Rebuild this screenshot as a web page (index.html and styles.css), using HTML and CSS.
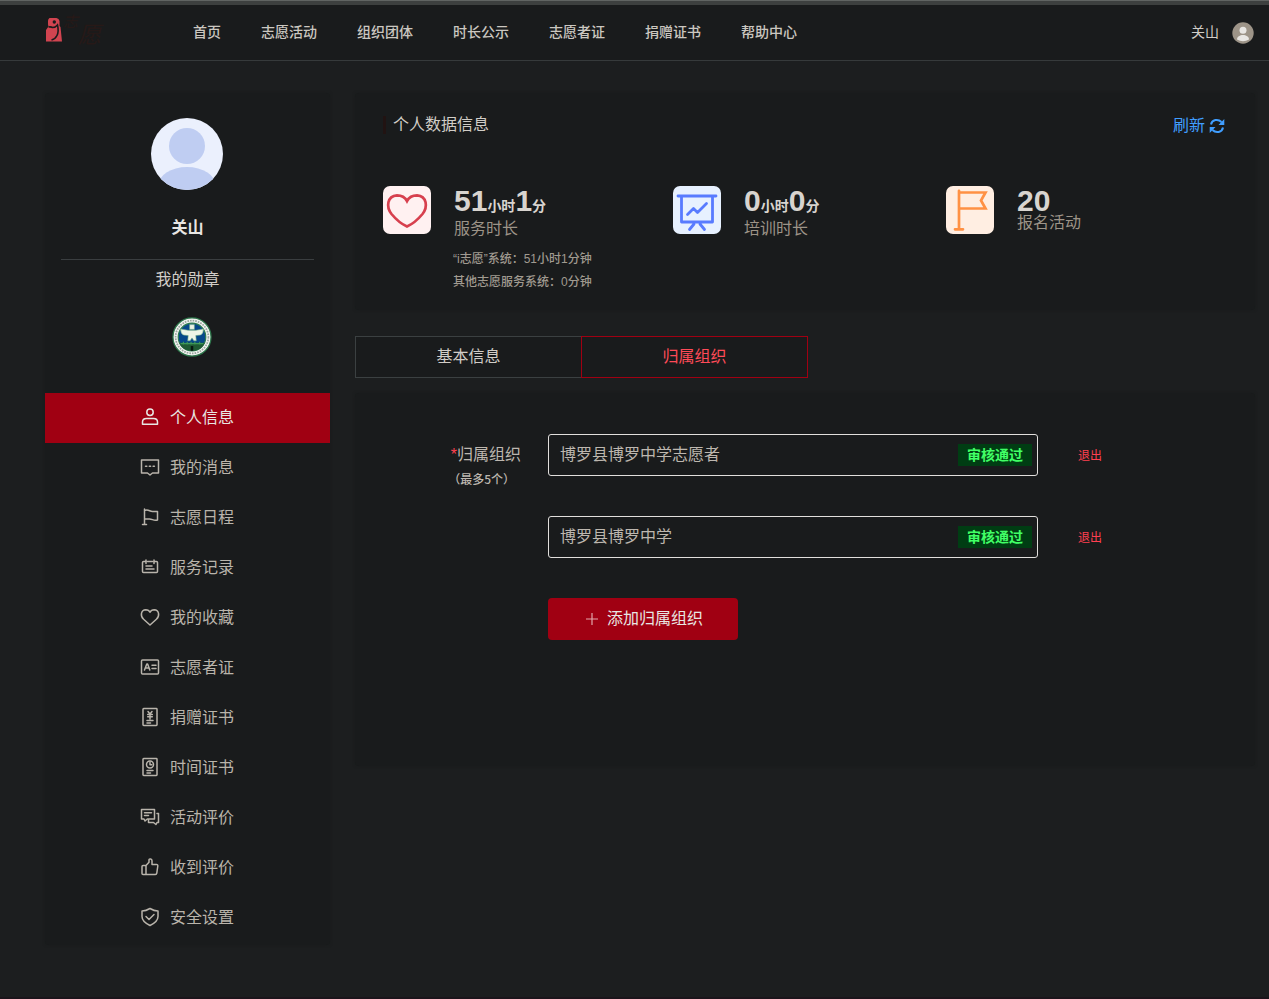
FILE: index.html
```html
<!DOCTYPE html>
<html lang="zh-CN">
<head>
<meta charset="utf-8">
<title>个人中心</title>
<link rel="stylesheet" href="styles.css">
</head>
<body>
<div class="edge"></div>
<header class="header">
  <div class="logo">
    <svg width="18" height="25" viewBox="0 0 18 25"><path d="M4.500 0h7Q14 .5 14.500 3v5l1 1 1.500 14.500h-16L1 12l2.500-3.500-.5-2V3Q3 .8 4.500 0Z" fill="#d14450"/><circle cx="9.300" cy="4" r="1.700" fill="#191b1c"/><path d="M3.500 9q2.500-.5 4 .5 3 0 5-2.500 1.500 6.500-.5 10.500-1.700 3.500-5.500 4.500" fill="none" stroke="#191b1c" stroke-width="1.600"/></svg>
    <span class="brand"><i class="brand-a">志</i><i class="brand-b">愿</i></span>
  </div>
  <nav class="nav"><a>首页</a><a>志愿活动</a><a>组织团体</a><a>时长公示</a><a>志愿者证</a><a>捐赠证书</a><a>帮助中心</a></nav>
  <div class="account"><span>关山</span>
    <svg width="22" height="22" viewBox="0 0 22 22"><circle cx="11" cy="11" r="10.700" fill="#9d9488"/><circle cx="11" cy="8.300" r="3.500" fill="#e8e6e3"/><path d="M5 17.500c0-6 12-6 12 0q-6 3.500-12 0Z" fill="#e8e6e3"/></svg>
  </div>
</header>
<main class="page">
  <aside class="sidebar">
    <svg class="avatar" width="72" height="72" viewBox="0 0 72 72"><defs><clipPath id="face"><circle cx="36" cy="36" r="36"/></clipPath></defs><g clip-path="url(#face)"><path fill="#ebf0fd" d="M0 0h72v72H0z"/><circle cx="36" cy="28" r="18" fill="#bfcdf2"/><ellipse cx="36" cy="68" rx="29" ry="19" fill="#bfcdf2"/></g></svg>
    <div class="name">关山</div>
    <div class="medals">我的勋章</div>
    <svg class="badge" width="40" height="40" viewBox="0 0 42 42"><circle cx="21" cy="21" r="20" fill="#f1f4f0" stroke="#2d774b" stroke-width="1.300"/><circle cx="21" cy="21" r="17.200" fill="none" stroke="#9ba59f" stroke-width="1.800" stroke-dasharray="1.700 1.100"/><circle cx="21" cy="21" r="14.500" fill="#07488a" stroke="#2e7d50" stroke-width="1.200"/><path d="M7.500 27h27q-3 8.500-13.500 8.500T7.500 27Z" fill="#1f5a33"/><path d="M9 28h24M12 26v3m4-3v3m4-3v3m4-3v3m5-3v3" stroke="#3d9856" stroke-width="1.200"/><path d="M19.700 30.500h2.600v5h-2.600z" fill="#08180f"/><path d="M18.500 8h5v5h-5zM9 12.500l8 1.500h8l8-1.500q0 5-3 6.500l-5 .5 .5 5.500h-2.500l-2-3-2 3h-2.500l.5-5.500-5-.5q-3-1.500-3-6.500Z" fill="#eef5e7" stroke="#72ad83" stroke-width=".6"/></svg>
    <ul class="menu">
      <li class="active"><svg viewBox="0 0 20 20"><circle cx="10" cy="5.200" r="3.200"/><path d="M2.500 17.300V15c0-2.500 2-3.500 4-3.500h7c2 0 4 1 4 3.500v2.300Z"/></svg>个人信息</li>
      <li><svg viewBox="0 0 20 20"><path d="M1.500 3h17v13h-6L10 18l-2.500-2h-6ZM5.500 9.200h1.300m2.500 0h1.300m2.500 0h1.300"/></svg>我的消息</li>
      <li><svg viewBox="0 0 20 20"><path d="M4.500 2v15.500M2.500 17.500h4M4.500 3.500c4-1.500 5 1 8 1h5V13c-4 1-5-1-8-1h-5"/></svg>志愿日程</li>
      <li><svg viewBox="0 0 20 20"><path d="M5 4.500H3.500q-1 0-1 1v9q0 1 1 1h13q1 0 1-1v-9q0-1-1-1H15M7.500 4.500h5M6 3v3.500M14 3v3.500M6 9h6M6 12h8"/></svg>服务记录</li>
      <li><svg viewBox="0 0 20 20"><path d="M10 18 3.600 12.300C0 9 .8 3 5.800 2.700c2 0 3.500 1 4.200 2.600.7-1.600 2.200-2.600 4.200-2.600 5 .3 5.800 6.300 2.200 9.600Z"/></svg>我的收藏</li>
      <li><svg viewBox="0 0 20 20"><rect x="1.500" y="3" width="17" height="14" rx="1"/><path d="m4.500 13 2.300-6h.8l2.200 6M5.500 11h3.500M12 8.200h4M12 11.500h4"/></svg>志愿者证</li>
      <li><svg viewBox="0 0 20 20"><rect x="3" y="1.500" width="14" height="17" rx=".7"/><path d="m8 4.500 2 2.500 2-2.500M10 7v5M7.700 7.500h4.600M7.700 9.800h4.600M7 13.500h6M7 16h3.500"/></svg>捐赠证书</li>
      <li><svg viewBox="0 0 20 20"><rect x="3" y="1.500" width="14" height="17" rx=".7"/><circle cx="10" cy="7.500" r="3.500"/><path d="M10 5.500v2.200h1.800M7 13.500h6M7 16h3.500"/></svg>时间证书</li>
      <li><svg viewBox="0 0 20 20"><path d="M1.500 2.500h13V12H7.300L5 14l-1-2H1.500ZM4.500 5.800h7M4.500 8.500h4M17 6.500h1.500v9H17l-1 2-2.500-2h-5V13"/></svg>活动评价</li>
      <li><svg viewBox="0 0 20 20"><path d="M6 8.500V17.500H3q-1 0-1-1v-7q0-1 1-1h3l3-3.200V3c0-1.500 3-1.500 3 .8v3.700h4.500q1.500 0 1.300 1.500l-1 7.200q-.2 1.300-1.500 1.300H6"/></svg>收到评价</li>
      <li><svg viewBox="0 0 20 20"><path d="M10 1.500q4 2.500 8 2.500v5.500c0 4-3.500 6.800-8 9-4.500-2.200-8-5-8-9V4q4 0 8-2.500ZM6 9.500l3 3 5-5"/></svg>安全设置</li>
    </ul>
  </aside>
  <div class="content">
    <section class="panel summary">
      <div class="summary-head"><h2>个人数据信息</h2><a class="refresh">刷新 <svg width="16" height="16" viewBox="0 0 16 16"><path d="M2 6.500C3 1.500 9 .5 12.500 4M14 9.500c-1 5-7 6-10.500 2.500" fill="none" stroke="#409eff" stroke-width="2"/><path d="M15.300 1v6H9.500ZM.7 15V9h5.800Z" fill="#409eff"/></svg></a></div>
      <div class="stats">
        <div class="stat"><svg width="48" height="48" viewBox="0 0 48 48"><rect width="48" height="48" rx="7" fill="#fff1f1"/><path d="M24 40.500Q16 37 8.500 28C3 21 4 10 14 9.300q7 0 10 5.700 3-5.700 10-5.700C44 10 45 21 39.500 28Q32 37 24 40.500Z" fill="none" stroke="#d7404e" stroke-width="2.700"/></svg>
          <div><div class="value">51<small>小时</small>1<small>分</small></div><div class="label">服务时长</div><div class="detail"><p>“i志愿”系统：51小时1分钟</p><p>其他志愿服务系统：0分钟</p></div></div></div>
        <div class="stat"><svg width="48" height="48" viewBox="0 0 48 48"><rect width="48" height="48" rx="7" fill="#e7f1ff"/><path d="M5 10h38M8.500 10v26h31V10M21 38l-4.500 5.500M27 38l4.500 5.500M14.500 28.500l6-6 4 4 9-9" fill="none" stroke="#587bff" stroke-width="2.800" stroke-linecap="round" stroke-linejoin="round"/></svg>
          <div><div class="value">0<small>小时</small>0<small>分</small></div><div class="label">培训时长</div></div></div>
        <div class="stat"><svg width="48" height="48" viewBox="0 0 48 48"><rect width="48" height="48" rx="7" fill="#ffeee2"/><path d="M13 4.800V43M9 43.300h8M13 6.500h26.500l-4.500 8 4.500 8H13" fill="none" stroke="#ff9144" stroke-width="2.700" stroke-linecap="round"/></svg>
          <div><div class="value short">20</div><div class="label">报名活动</div></div></div>
      </div>
    </section>
    <div class="tabs"><div class="tab">基本信息</div><div class="tab current">归属组织</div></div>
    <section class="panel form">
      <div class="form-label"><div><b>*</b>归属组织</div><small>（最多5个）</small></div>
      <div class="orgs">
        <div class="org"><div class="field">博罗县博罗中学志愿者<span class="status">审核通过</span></div><a class="quit">退出</a></div>
        <div class="org"><div class="field">博罗县博罗中学<span class="status">审核通过</span></div><a class="quit">退出</a></div>
        <div class="add"><svg width="12" height="12" viewBox="0 0 12 12"><path d="M0 6h12M6 0v12" stroke="#e2a7ab" stroke-width="1.200"/></svg>添加归属组织</div>
      </div>
    </section>
  </div>
</main>
</body>
</html>
```
FILE: styles.css
```css
* { box-sizing: border-box; }
body {
  margin: 0;
  height: 999px;
  overflow: hidden;
  display: flex;
  flex-direction: column;
  background: #1c1e1f;
  border-bottom: 2px solid #1b151b;
  color: #d1cdc7;
  font: 16px/24px "Liberation Sans", "Noto Sans CJK SC", sans-serif;
}
svg { display: block; flex: none; }
h2, p, ul { margin: 0; padding: 0; }

.edge { height: 5px; flex: none; border-top: 1px solid #606462; background: #3d403f; }
.header {
  height: 56px;
  flex: none;
  display: flex;
  border-bottom: 1px solid #363a3b;
  background: #191b1c;
  font-size: 14px;
  line-height: 55px;
}
.logo { width: 193px; padding: 13px 0 0 45px; display: flex; }
.brand { display: flex; color: #271917; font-family: "Noto Sans CJK SC", sans-serif; }
.brand-a { font-size: 15px; line-height: 15px; height: 15px; margin-top: -5px; }
.brand-b { font-size: 23px; line-height: 23px; height: 23px; margin-top: 4px; }
.nav { display: flex; gap: 40px; font-weight: 500; color: #cbc7c0; }
.account { margin-left: auto; display: flex; align-items: center; gap: 13px; padding-right: 15px; }

.page { display: flex; gap: 25px; padding: 32px 14px 0 45px; align-items: flex-start; }
.sidebar, .panel { background: #191b1c; border-radius: 4px; box-shadow: 0 0 3px #191b1c; }
.sidebar { width: 285px; height: 852px; padding-top: 25px; }
.avatar { margin-left: 106px; }
.name { height: 70px; margin: 0 16px; padding-top: 26px; border-bottom: 1px solid #3a3e40; text-align: center; font-weight: 700; color: #e8e6e3; }
.medals { text-align: center; margin-top: 8px; }
.badge { margin: 25px 0 0 127px; }
.menu { list-style: none; margin-top: 36px; }
.menu li { height: 50px; display: flex; align-items: center; gap: 10px; padding-left: 95px; color: #b9b4ab; }
.menu svg { width: 20px; height: 20px; margin-top: -2px; fill: none; stroke: currentColor; stroke-width: 1.5; stroke-linejoin: round; stroke-linecap: round; }
.menu .active { background: #a00012; color: #e8e6e3; }

.content { flex: 1; }
.summary { height: 217px; padding: 20px 30px 0 28px; }
.summary-head { display: flex; justify-content: space-between; height: 24px; }
.summary h2 { display: flex; align-items: center; font-size: 16px; font-weight: 400; }
.summary h2::before { content: ""; width: 3px; height: 18px; margin-right: 7px; background: #211312; }
.refresh { display: flex; align-items: center; gap: 4px; padding-top: 2px; color: #409eff; }
.stats { display: grid; grid-template-columns: 290px 273px auto; margin-top: 49px; }
.stat { display: flex; gap: 23px; align-items: flex-start; }
.value { font-size: 30px; line-height: 30px; height: 31px; font-weight: 700; color: #d8d4cf; white-space: nowrap; }
.value.short { height: 25px; }
.value small { font-size: 14px; }
.label { color: #9d9488; }
.detail { margin: 7px 0 0 -1px; font-size: 12px; line-height: 23px; font-weight: 500; color: #a09a90; white-space: nowrap; }

.tabs { display: flex; height: 42px; margin: 26px 0 15px; }
.tab { width: 227px; border: 1px solid #3b4041; background: #191b1c; text-align: center; line-height: 40px; }
.current { margin-left: -1px; border-color: #a00012; color: #ff4b58; }
.form { height: 373px; display: flex; padding-top: 41px; }
.form-label { width: 193px; padding: 9px 27px 0 0; text-align: right; color: #bdb7af; }
.form-label b { color: #ff4050; font-weight: 400; }
.form-label small { display: block; margin: 0 6px 0 0; font-size: 12px; font-weight: 500; font-family: "Noto Sans CJK SC", sans-serif; }
.orgs { display: flex; flex-direction: column; gap: 40px; }
.org { display: flex; gap: 40px; align-items: center; }
.field { width: 490px; height: 42px; display: flex; align-items: center; justify-content: space-between; padding: 0 5px 0 11px; border: 1px solid #e1dfdc; border-radius: 3px; color: #bdb7af; }
.status { width: 74px; height: 22px; background: #003d13; color: #41ff66; font-size: 14px; line-height: 22px; font-weight: 700; text-align: center; }
.quit { padding-top: 2px; color: #ff4050; font-size: 12px; }
.add { width: 190px; height: 42px; display: flex; align-items: center; justify-content: center; gap: 9px; padding-left: 3px; border-radius: 4px; background: #a00012; color: #e8e6e3; }
```
